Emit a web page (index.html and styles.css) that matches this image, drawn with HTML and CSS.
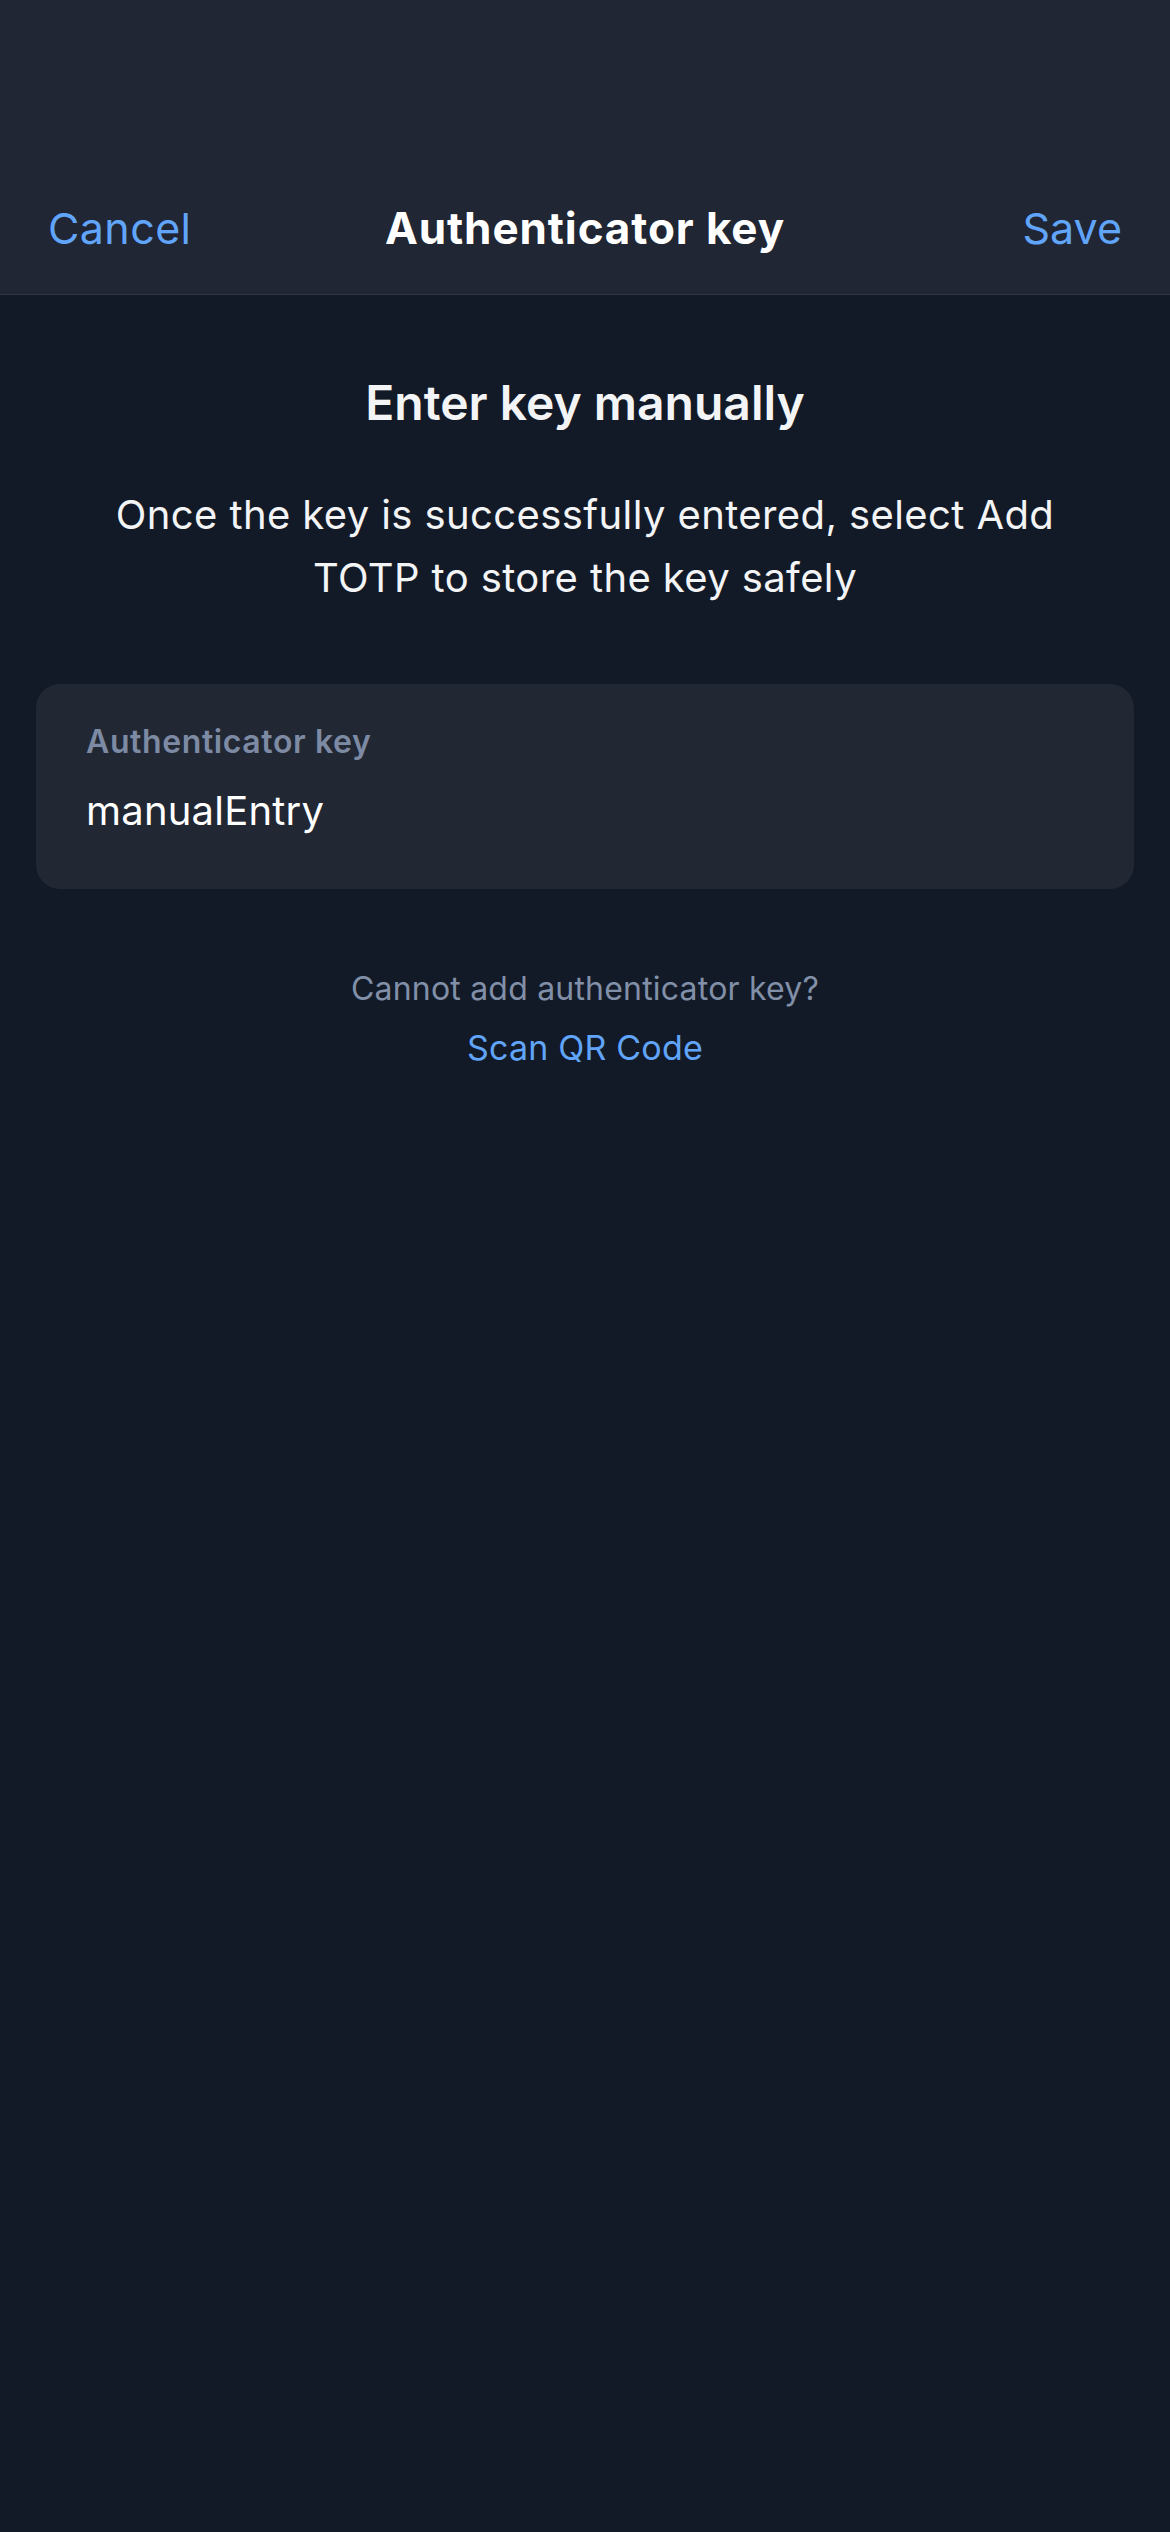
FILE: index.html
```html
<!DOCTYPE html>
<html lang="en">
<head>
<meta charset="utf-8">
<title>Authenticator key</title>
<link rel="stylesheet" href="styles.css">
</head>
<body>
<div class="screen">
  <header class="topbar">
    <nav class="navrow">
      <span class="nav-btn nav-left">Cancel</span>
      <h1 class="nav-title">Authenticator key</h1>
      <span class="nav-btn nav-right">Save</span>
    </nav>
  </header>
  <main class="content">
    <h2 class="heading">Enter key manually</h2>
    <p class="desc">Once the key is successfully entered, select Add TOTP to store the key safely</p>
    <div class="field">
      <div class="field-label">Authenticator key</div>
      <div class="field-value">manualEntry</div>
    </div>
    <div class="alt">
      <div class="alt-q">Cannot add authenticator key?</div>
      <div class="alt-link">Scan QR Code</div>
    </div>
  </main>
</div>
</body>
</html>
```

FILE: styles.css
```css
* { box-sizing: border-box; margin: 0; padding: 0; }
html, body { background: #131a27; }
body {
  width: 1170px;
  min-height: 2532px;
  font-family: Inter, "Noto Sans", "Liberation Sans", sans-serif;
  color: #f3f4f6;
}
.screen { min-height: 2532px; background: #131a27; }
.topbar {
  height: 295px;
  background: #202633;
  border-bottom: 1px solid #2f3644;
  display: flex;
  align-items: flex-end;
  padding: 0 48px 26px 48px;
}
.navrow {
  width: 100%;
  display: grid;
  grid-template-columns: 1fr auto 1fr;
  align-items: center;
  height: 80px;
}
.nav-btn {
  font-size: 43px;
  color: #60a5fa;
  font-weight: 400;
  letter-spacing: 0.4px;
}
.nav-left { justify-self: start; }
.nav-right { justify-self: end; letter-spacing: 0; }
.nav-title {
  font-size: 44px;
  font-weight: 700;
  color: #ffffff;
  letter-spacing: 0.9px;
}
.content {
  display: flex;
  flex-direction: column;
  align-items: center;
  padding: 78px 36px 0;
}
.heading {
  font-size: 48px;
  font-weight: 600;
  color: #f3f4f6;
  letter-spacing: 0;
  line-height: 60px;
}
.desc {
  margin-top: 50px;
  width: 1000px;
  text-align: center;
  font-size: 40px;
  line-height: 63px;
  color: #f3f4f6;
  letter-spacing: 0.4px;
}
.field {
  margin-top: 75px;
  width: 100%;
  height: 205px;
  background: #212733;
  border-radius: 24px;
  padding: 37px 50px 0;
}
.field-label {
  font-size: 32px;
  font-weight: 600;
  color: #7d8aa3;
  letter-spacing: 0.6px;
  line-height: 42px;
}
.field-value {
  margin-top: 23px;
  font-size: 40px;
  color: #ffffff;
  line-height: 50px;
  letter-spacing: 0.2px;
}
.alt {
  margin-top: 78px;
  display: flex;
  flex-direction: column;
  align-items: center;
}
.alt-q {
  font-size: 32px;
  color: #8190a8;
  line-height: 44px;
  letter-spacing: 0.2px;
}
.alt-link {
  margin-top: 14px;
  font-size: 34px;
  color: #60a5fa;
  line-height: 46px;
  letter-spacing: 0.2px;
}
```
